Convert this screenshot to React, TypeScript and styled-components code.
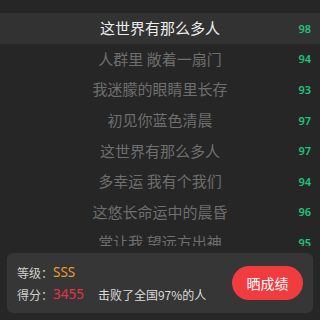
import React from "react";
import styled, { createGlobalStyle } from "styled-components";

const GlobalStyle = createGlobalStyle`
  html, body {
    margin: 0;
    padding: 0;
    background: #262626;
  }
  body {
    font-family: "Noto Sans CJK SC", "Noto Sans", sans-serif;
  }
`;

const Page = styled.div`
  width: 320px;
  height: 320px;
  display: flex;
  flex-direction: column;
  background: #262626;
  overflow: hidden;
`;

const LyricList = styled.div`
  height: 246px;
  padding-top: 13px;
  box-sizing: border-box;
  overflow: hidden;
  flex-shrink: 0;
`;

const Row = styled.div<{ $active?: boolean }>`
  height: 30.6px;
  display: grid;
  grid-template-columns: 40px 1fr 40px;
  align-items: center;
  background: ${(p) => (p.$active ? "#323232" : "transparent")};
`;

const LyricText = styled.div<{ $active?: boolean }>`
  grid-column: 2;
  text-align: center;
  font-size: 15px;
  line-height: 20px;
  color: ${(p) => (p.$active ? "#ececec" : "#6e6e6e")};
  white-space: nowrap;
`;

const Score = styled.div`
  grid-column: 3;
  text-align: right;
  padding-right: 9px;
  font-family: "Noto Sans", sans-serif;
  font-size: 11px;
  font-weight: 600;
  color: #1fc47b;
`;

const ResultCard = styled.div`
  margin: 7px 7px 0;
  height: 60px;
  border-radius: 6px;
  background: #363636;
  display: flex;
  align-items: center;
  justify-content: space-between;
  padding: 0 10px;
  flex-shrink: 0;
`;

const InfoColumn = styled.div`
  display: flex;
  flex-direction: column;
`;

const InfoLine = styled.div`
  display: flex;
  align-items: center;
  height: 22px;
  color: #cfcfcf;
  white-space: nowrap;
`;

const Label = styled.span`
  font-size: 12px;
`;

const Value = styled.span<{ $color: string }>`
  font-family: "Noto Sans", sans-serif;
  font-size: 13.5px;
  color: ${(p) => p.$color};
`;

const Beat = styled.span`
  margin-left: 14px;
  font-size: 12px;
  color: #dcdcdc;
`;

const ShareButton = styled.button`
  width: 71px;
  height: 34px;
  border: none;
  border-radius: 17px;
  background: #f03c3f;
  color: #ffffff;
  font-family: "Noto Sans CJK SC", sans-serif;
  font-size: 14px;
  padding: 0;
  cursor: pointer;
`;

const lyrics = [
  { text: "这世界有那么多人", score: 98 },
  { text: "人群里 敞着一扇门", score: 94 },
  { text: "我迷朦的眼睛里长存", score: 93 },
  { text: "初见你蓝色清晨", score: 97 },
  { text: "这世界有那么多人", score: 97 },
  { text: "多幸运 我有个我们", score: 94 },
  { text: "这悠长命运中的晨昏", score: 96 },
  { text: "常让我 望远方出神", score: 95 },
];

export default function App() {
  return (
    <>
      <GlobalStyle />
      <Page>
        <LyricList>
          {lyrics.map((l, i) => (
            <Row key={i} $active={i === 0}>
              <LyricText $active={i === 0}>{l.text}</LyricText>
              <Score>{l.score}</Score>
            </Row>
          ))}
        </LyricList>
        <ResultCard>
          <InfoColumn>
            <InfoLine>
              <Label>等级：</Label>
              <Value $color="#e59e33">SSS</Value>
            </InfoLine>
            <InfoLine>
              <Label>得分：</Label>
              <Value $color="#e4344a">3455</Value>
              <Beat>击败了全国97%的人</Beat>
            </InfoLine>
          </InfoColumn>
          <ShareButton>晒成绩</ShareButton>
        </ResultCard>
      </Page>
    </>
  );
}
